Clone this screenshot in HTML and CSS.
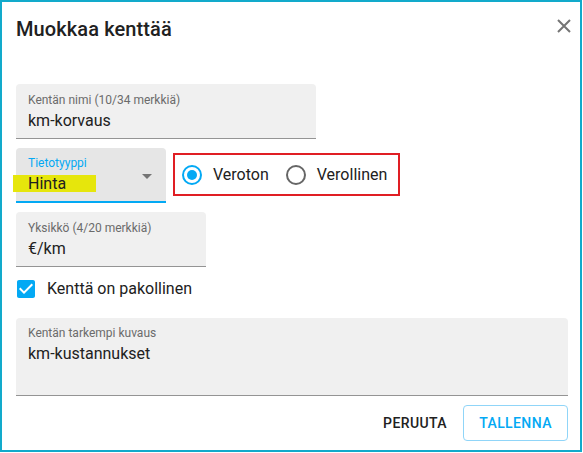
FILE: index.html
```html
<!DOCTYPE html>
<html lang="fi">
<head>
<meta charset="utf-8">
<title>Muokkaa kenttää</title>
<link rel="stylesheet" href="styles.css">
</head>
<body>
<div class="dialog">
  <header class="head">
    <h2 class="title">Muokkaa kenttää</h2>
    <button class="close" aria-label="Sulje">
      <svg width="14" height="14" viewBox="0 0 14 14"><path d="M1 1L13 13M13 1L1 13" stroke="#757575" stroke-width="2" fill="none"/></svg>
    </button>
  </header>
  <div class="body">
    <div class="field f-name">
      <span class="label">Kentän nimi (10/34 merkkiä)</span>
      <span class="value">km-korvaus</span>
    </div>
    <div class="row">
      <div class="field select">
        <div class="inner">
          <span class="label">Tietotyyppi</span>
          <span class="value"><span class="mark">Hinta</span></span>
        </div>
        <svg class="arrow" width="24" height="24" viewBox="0 0 24 24"><path d="M7 10l5 5 5-5z" fill="#757575"/></svg>
      </div>
      <div class="radios">
        <span class="radio">
          <svg width="20" height="20" viewBox="0 0 20 20"><circle cx="10" cy="10" r="9" fill="none" stroke="#03a9f4" stroke-width="2"/><circle cx="10" cy="10" r="5" fill="#03a9f4"/></svg>
          <span class="rlabel">Veroton</span>
        </span>
        <span class="radio">
          <svg width="20" height="20" viewBox="0 0 20 20"><circle cx="10" cy="10" r="9" fill="none" stroke="#666" stroke-width="2"/></svg>
          <span class="rlabel">Verollinen</span>
        </span>
      </div>
    </div>
    <div class="field f-unit">
      <span class="label">Yksikkö (4/20 merkkiä)</span>
      <span class="value">€/km</span>
    </div>
    <div class="check">
      <svg width="24" height="24" viewBox="0 0 24 24"><path d="M19 3H5c-1.11 0-2 .9-2 2v14c0 1.1.89 2 2 2h14c1.11 0 2-.9 2-2V5c0-1.1-.89-2-2-2zm-9 14l-5-5 1.41-1.41L10 14.17l7.59-7.59L19 8l-9 9z" fill="#03a9f4"/></svg>
      <span class="clabel">Kenttä on pakollinen</span>
    </div>
    <div class="field area">
      <span class="label">Kentän tarkempi kuvaus</span>
      <span class="value">km-kustannukset</span>
    </div>
  </div>
  <div class="actions">
    <button class="btn text">Peruuta</button>
    <button class="btn outlined">Tallenna</button>
  </div>
</div>
</body>
</html>
```

FILE: styles.css
```css
* { box-sizing: border-box; }
html, body { margin: 0; padding: 0; background: #fff; }
body {
  font-family: Roboto, "Liberation Sans", Arial, sans-serif;
  color: #212121;
  width: 583px;
  height: 453px;
}
.dialog {
  width: 582px;
  height: 452px;
  border: 2px solid #12aacb;
  padding: 11px 12px 0 14px;
  display: flex;
  flex-direction: column;
}
.head {
  display: flex;
  justify-content: space-between;
  align-items: flex-start;
}
.title {
  margin: 0;
  font-size: 20px;
  font-weight: 500;
  line-height: 32px;
  color: #212121;
  letter-spacing: 0.1px;
}
.close {
  border: 0;
  background: none;
  padding: 0;
  margin: 6px -3px 0 0;
  width: 14px;
  height: 14px;
  display: flex;
}
.body {
  display: flex;
  flex-direction: column;
  margin-top: 39px;
}
.field {
  height: 55px;
  background: #f0f0f0;
  border-radius: 4px 4px 0 0;
  border-bottom: 1px solid #949494;
  padding: 8px 12px 0;
  display: flex;
  flex-direction: column;
}
.label {
  font-size: 12px;
  line-height: 16px;
  color: #6b6b6b;
}
.value {
  font-size: 16px;
  line-height: 20px;
  margin-top: 3px;
  color: #212121;
}
.f-name { width: 300px; }
.row {
  display: flex;
  margin-top: 9px;
  height: 55px;
}
.select {
  width: 150px;
  background: #e6e6e6;
  border-bottom: 2px solid #03a9f4;
  flex-direction: row;
  padding-top: 0;
}
.select .inner {
  flex: 1;
  display: flex;
  flex-direction: column;
  padding-top: 7px;
}
.select .label { color: #03a9f4; }
.select .value { margin-top: 3px; }
.mark {
  position: relative;
  z-index: 0;
}
.mark::before {
  content: "";
  position: absolute;
  z-index: -1;
  left: -15px;
  top: 1px;
  width: 83px;
  height: 17px;
  background: #e6e60c;
}
.arrow {
  margin: 16px -5px 0 0;
  flex: none;
}
.radios {
  margin: 5px 0 0 7px;
  height: 43px;
  border: 2px solid #e01e24;
  display: flex;
  align-items: center;
  padding: 0 11px 0 7px;
}
.radio {
  display: flex;
  align-items: center;
}
.radio + .radio { margin-left: 17px; }
.radio svg { display: block; }
.rlabel {
  margin-left: 11px;
  font-size: 16px;
  line-height: 20px;
  color: #212121;
}
.f-unit { width: 190px; margin-top: 9px; }
.check {
  display: flex;
  align-items: center;
  height: 24px;
  margin-top: 10px;
  margin-left: -2px;
}
.check svg { display: block; }
.clabel {
  margin-left: 9px;
  font-size: 16px;
  line-height: 20px;
}
.area {
  margin-top: 17px;
  height: 78px;
  padding-top: 7px;
}
.actions {
  display: flex;
  justify-content: flex-end;
  margin-top: 9px;
}
.btn {
  font-family: Roboto, "Liberation Sans", Arial, sans-serif;
  font-size: 14px;
  font-weight: 500;
  text-transform: uppercase;
  letter-spacing: 0.4px;
  line-height: 24px;
  border-radius: 4px;
  background: #fff;
  cursor: pointer;
}
.btn.text {
  border: 0;
  padding: 6px 8px;
  color: #212121;
}
.btn.outlined {
  margin-left: 8px;
  width: 105px;
  height: 36px;
  padding: 5px 15px;
  border: 1px solid #90d5f8;
  color: #03a9f4;
}
```
